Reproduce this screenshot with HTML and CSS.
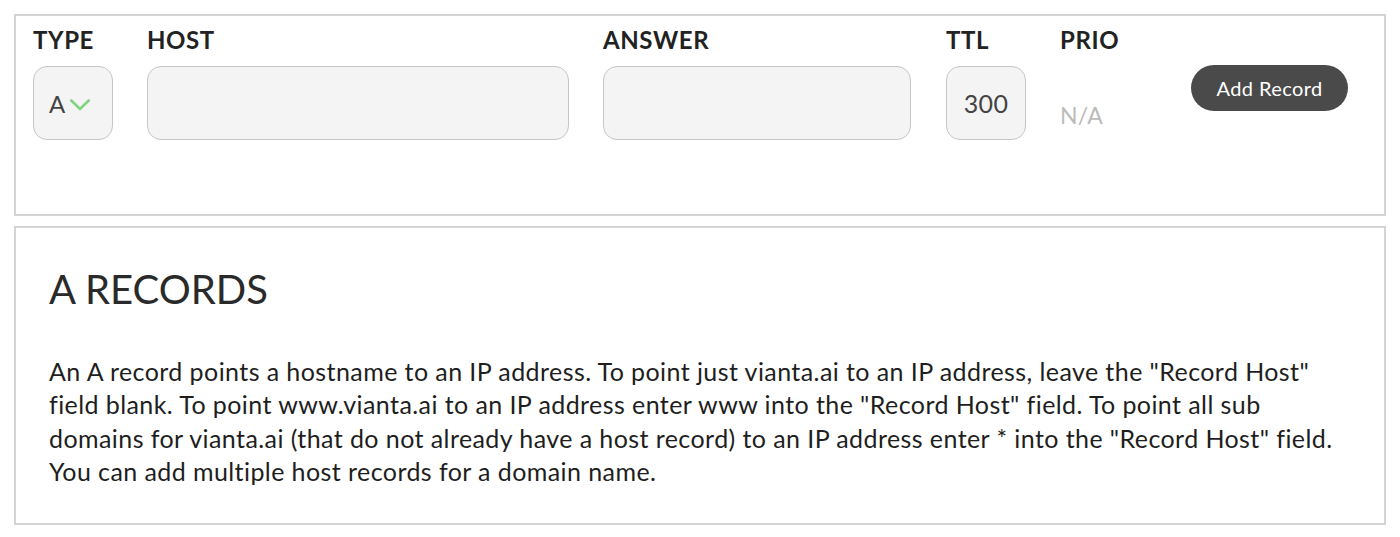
FILE: index.html
```html
<!DOCTYPE html>
<html>
<head>
<meta charset="utf-8">
<link rel="stylesheet" href="styles.css">
</head>
<body>
<div class="panel form-panel">
  <div class="field type-field">
    <div class="label">TYPE</div>
    <div class="box select-box">
      <span class="select-value">A</span>
      <svg class="chevron" width="22" height="13" viewBox="0 0 22 13"><path d="M1.5 1.8 L11 11 L20.5 1.8" fill="none" stroke="#80d480" stroke-width="2.6"/></svg>
    </div>
  </div>
  <div class="field host-field">
    <div class="label">HOST</div>
    <div class="box"></div>
  </div>
  <div class="field answer-field">
    <div class="label">ANSWER</div>
    <div class="box"></div>
  </div>
  <div class="field ttl-field">
    <div class="label">TTL</div>
    <div class="box ttl-box">300</div>
  </div>
  <div class="field prio-field">
    <div class="label">PRIO</div>
    <div class="prio-value">N/A</div>
  </div>
  <div class="action">
    <button class="add-btn">Add Record</button>
  </div>
</div>
<div class="panel info-panel">
  <h2 class="info-title">A RECORDS</h2>
  <p class="info-text">An A record points a hostname to an IP address. To point just vianta.ai to an IP address, leave the "Record Host" field blank. To point www.vianta.ai to an IP address enter www into the "Record Host" field. To point all sub domains for vianta.ai (that do not already have a host record) to an IP address enter * into the "Record Host" field. You can add multiple host records for a domain name.</p>
</div>
</body>
</html>
```
FILE: styles.css
```css
* { box-sizing: border-box; }
html, body { margin: 0; background: #fff; }
body {
  padding: 14px;
  font-family: "Lato", "Open Sans", sans-serif;
  color: #222;
}
.panel {
  border: 2px solid #d4d4d4;
  background: #fff;
}
.form-panel {
  height: 202px;
  display: flex;
  align-items: flex-start;
  padding: 11px 17px 0 17px;
  gap: 34px;
}
.field {
  display: flex;
  flex-direction: column;
  gap: 13px;
}
.label {
  font-size: 24px;
  font-weight: 700;
  line-height: 26px;
  letter-spacing: 0.6px;
  color: #222;
}
.box {
  height: 74px;
  border: 1.5px solid #c6c6c6;
  border-radius: 14px;
  background: #f4f4f4;
}
.type-field .box { width: 80px; }
.host-field .box { width: 422px; }
.answer-field .box { width: 308px; }
.ttl-field { margin-left: 1px; }
.ttl-field .box { width: 80px; }
.prio-field { width: 97px; }
.select-box {
  display: flex;
  align-items: center;
  padding-left: 15px;
  gap: 4px;
}
.select-value {
  font-size: 24px;
  color: #444;
}
.chevron { margin-top: 3px; }
.ttl-box {
  display: flex;
  align-items: center;
  justify-content: center;
  font-size: 25px;
  letter-spacing: 0.4px;
  color: #444;
}
.prio-value {
  margin-top: 35px;
  font-size: 23px;
  letter-spacing: 0.3px;
  color: #bbb;
}
.action { padding-top: 38px; }
.add-btn {
  width: 157px;
  height: 46px;
  border: none;
  border-radius: 23px;
  background: #4a4a4a;
  color: #fff;
  font-family: "Lato", "Open Sans", sans-serif;
  font-size: 20px;
  letter-spacing: 0.4px;
  padding: 0;
}
.info-panel {
  margin-top: 10px;
  height: 299px;
  padding: 39px 33px 0 33px;
}
.info-title {
  margin: 0;
  font-size: 40px;
  font-weight: 400;
  line-height: 44px;
  color: #2a2a2a;
}
.info-text {
  margin: 44px 0 0 0;
  font-size: 25px;
  letter-spacing: 0.42px;
  line-height: 33.4px;
  color: #1e1e1e;
}
```
